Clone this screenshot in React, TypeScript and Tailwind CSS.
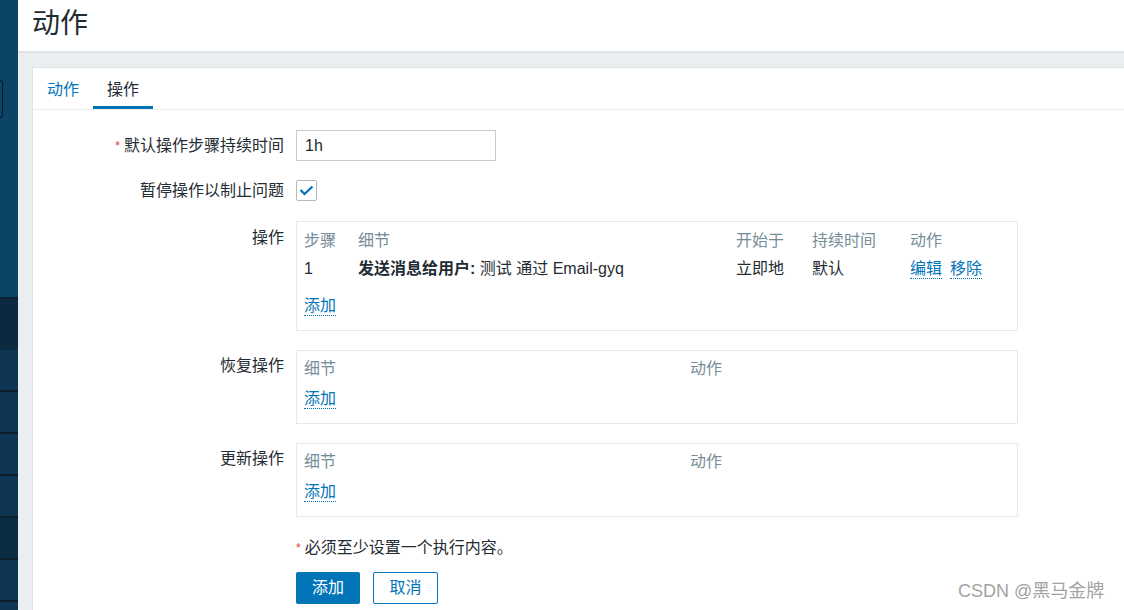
import React from 'react';

const font = { fontFamily: '"Liberation Sans", "Noto Sans CJK SC", sans-serif' };

function Link({ children }: { children: React.ReactNode }) {
  return (
    <span className="inline-block leading-[19px] text-[#0275b8] border-b border-dotted border-[#0275b8] cursor-pointer">
      {children}
    </span>
  );
}

function Sidebar() {
  const items = [false, false, false, false, true, false, false];
  return (
    <div className="w-[18px] shrink-0 flex flex-col bg-[#0e3552] overflow-hidden">
      <div className="h-[297px] shrink-0 bg-[#0c4466] flex flex-col">
        <div className="h-[80px] shrink-0" />
        <div className="h-[38px] w-[3px] shrink-0 rounded-r-[3px] border-r border-y border-[#071b28]" />
      </div>
      <div className="h-[2px] shrink-0 bg-[#0a2233]" />
      <div className="h-[51px] shrink-0 bg-[#0b2a3f]" />
      {items.map((dark, i) => (
        <div key={i} className="flex flex-col shrink-0">
          <div className={dark ? 'h-[40px] bg-[#0b2d44]' : 'h-[40px] bg-[#0e3552]'} />
          <div className="h-[2px] bg-[#0a1e2c]" />
        </div>
      ))}
    </div>
  );
}

function Label({ children, required, pt }: { children: React.ReactNode; required?: boolean; pt?: string }) {
  return (
    <div className={`w-[251px] shrink-0 text-right leading-[24px] text-[#1f2c33] ${pt ?? ''}`}>
      {required && <span className="text-[#e33734] text-[12px] align-top mr-[4px]">*</span>}
      {children}
    </div>
  );
}

export default function App() {
  return (
    <div className="relative w-[1124px] h-[610px] overflow-hidden flex text-[16px]" style={font}>
      <Sidebar />
      <div className="flex-1 flex flex-col bg-[#ebeef0]">
        {/* Header */}
        <div className="h-[53px] shrink-0 bg-white border-b-[2px] border-[#dfe4e7] pl-[14px]">
          <h1 className="text-[28px] leading-[47px] text-[#1f2c33]">动作</h1>
        </div>

        {/* Panel */}
        <div className="mt-[14px] ml-[14px] flex-1 bg-white border-l border-t border-[#dfe4e7]">
          {/* Tabs */}
          <div className="flex border-b border-[#ebeef0]">
            <div className="px-[14px] pt-[10px] h-[41px] leading-[24px] text-[#0275b8] border-b-[3px] border-transparent">
              动作
            </div>
            <div className="px-[14px] pt-[10px] h-[41px] leading-[24px] text-[#1f2c33] border-b-[3px] border-[#0275b8]">
              操作
            </div>
          </div>

          {/* Form */}
          <div className="pt-[20px] flex flex-col">
            <div className="flex items-center gap-[12px]">
              <Label required>默认操作步骤持续时间</Label>
              <div className="w-[200px] h-[31px] border border-[#c4cdd2] px-[8px] leading-[29px] text-[#1f2c33]">
                1h
              </div>
            </div>

            <div className="mt-[19px] flex items-center gap-[12px] h-[21px]">
              <Label>暂停操作以制止问题</Label>
              <div className="w-[21px] h-[21px] border border-[#acbbc2] rounded-[2px] flex items-center justify-center">
                <svg width="15" height="11" viewBox="0 0 15 11" fill="none">
                  <path d="M1.5 5 L5.5 9 L13.5 1.5" stroke="#0275b8" strokeWidth="2.2" />
                </svg>
              </div>
            </div>

            {/* Operations */}
            <div className="mt-[20px] flex items-start gap-[12px]">
              <Label pt="pt-[5px]">操作</Label>
              <div className="w-[722px] border border-[#e6e9eb] pl-[7px] pt-[7px] pb-[12px] leading-[24px]">
                <div className="grid grid-cols-[54px_378px_76px_98px_1fr] text-[#768d99]">
                  <div>步骤</div>
                  <div>细节</div>
                  <div>开始于</div>
                  <div>持续时间</div>
                  <div>动作</div>
                </div>
                <div className="mt-[4px] grid grid-cols-[54px_378px_76px_98px_1fr] text-[#1f2c33]">
                  <div>1</div>
                  <div>
                    <span className="font-bold">发送消息给用户:</span> 测试 通过 Email-gyq
                  </div>
                  <div>立即地</div>
                  <div>默认</div>
                  <div>
                    <span className="mr-[8px]">
                      <Link>编辑</Link>
                    </span>
                    <Link>移除</Link>
                  </div>
                </div>
                <div className="mt-[13px]">
                  <Link>添加</Link>
                </div>
              </div>
            </div>

            {/* Recovery */}
            <div className="mt-[19px] flex items-start gap-[12px]">
              <Label pt="pt-[4px]">恢复操作</Label>
              <div className="w-[722px] border border-[#e6e9eb] pl-[7px] pt-[6px] pb-[12px] leading-[24px]">
                <div className="grid grid-cols-[386px_1fr] text-[#768d99]">
                  <div>细节</div>
                  <div>动作</div>
                </div>
                <div className="mt-[6px]">
                  <Link>添加</Link>
                </div>
              </div>
            </div>

            {/* Update */}
            <div className="mt-[19px] flex items-start gap-[12px]">
              <Label pt="pt-[4px]">更新操作</Label>
              <div className="w-[722px] border border-[#e6e9eb] pl-[7px] pt-[6px] pb-[12px] leading-[24px]">
                <div className="grid grid-cols-[386px_1fr] text-[#768d99]">
                  <div>细节</div>
                  <div>动作</div>
                </div>
                <div className="mt-[6px]">
                  <Link>添加</Link>
                </div>
              </div>
            </div>

            {/* Footer */}
            <div className="mt-[19px] pl-[263px] leading-[24px] text-[#1f2c33]">
              <span className="text-[#e33734] text-[12px] align-top mr-[4px]">*</span>
              必须至少设置一个执行内容。
            </div>
            <div className="mt-[12px] pl-[263px] flex gap-[13px]">
              <button className="w-[64px] h-[32px] bg-[#0275b8] text-white rounded-[2px]">添加</button>
              <button className="w-[65px] h-[32px] bg-white text-[#0275b8] border border-[#0275b8] rounded-[2px]">
                取消
              </button>
            </div>
          </div>
        </div>
      </div>

      {/* Watermark */}
      <div className="absolute left-[958px] top-[579px] text-[18px] leading-[24px] text-[#a3a3a3] whitespace-nowrap">
        CSDN @黑马金牌
      </div>
    </div>
  );
}
